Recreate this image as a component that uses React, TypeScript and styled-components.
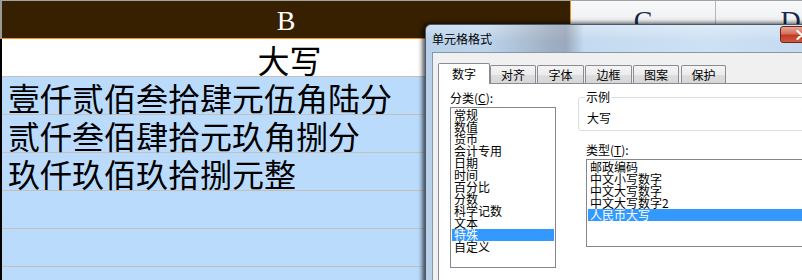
import React from 'react';
import styled, { createGlobalStyle } from 'styled-components';

const UI_FONT = `"Noto Sans CJK SC", "Noto Sans", sans-serif`;

const GlobalStyle = createGlobalStyle`
  html, body { margin: 0; padding: 0; background: #fff; overflow: hidden; }
  #root { width: 802px; height: 280px; }
`;

const Screen = styled.div`
  position: relative;
  width: 802px;
  height: 280px;
  overflow: hidden;
  background: #fff;
`;

const Sheet = styled.div`
  display: flex;
  flex-direction: column;
`;

const HeaderRow = styled.div`
  display: flex;
  border-top: 1px solid #a3a3a3;
  border-left: 2px solid #9a9a9a;
`;

const HeaderCell = styled.div<{ $w: number; $active?: boolean }>`
  box-sizing: border-box;
  width: ${(p) => p.$w}px;
  flex: none;
  height: 38px;
  padding-top: 2px;
  display: flex;
  align-items: center;
  justify-content: center;
  font-family: "Liberation Serif", "DejaVu Serif", serif;
  font-size: 28px;
  line-height: 30px;
  color: ${(p) => (p.$active ? '#ffffff' : '#16284a')};
  background: ${(p) => (p.$active ? '#372000' : 'linear-gradient(#f7f8f9, #e9ebee)')};
  border-right: 1px solid ${(p) => (p.$active ? '#f0902a' : '#b4b8be')};
  border-bottom: 1px solid ${(p) => (p.$active ? '#f0902a' : '#b4b8be')};
`;

const Body = styled.div`
  display: flex;
  flex-direction: column;
  border-left: 2px solid #000;
`;

const Row = styled.div<{ $selected?: boolean; $center?: boolean }>`
  box-sizing: border-box;
  width: 569px;
  height: 38px;
  padding: 2px 0 0 6px;
  display: flex;
  align-items: center;
  justify-content: ${(p) => (p.$center ? 'center' : 'flex-start')};
  background: ${(p) => (p.$selected ? '#bbdbfc' : '#ffffff')};
  border-bottom: 1px solid #c6c0bb;
  font-family: ${UI_FONT};
  font-size: 32px;
  line-height: 34px;
  color: #000;
  white-space: nowrap;
`;

const Dialog = styled.div`
  position: absolute;
  left: 425px;
  top: 24px;
  width: 404px;
  height: 290px;
  box-sizing: border-box;
  border: 1px solid #4b596c;
  border-radius: 6px 6px 0 0;
  background: linear-gradient(90deg, #b8d0e9 0%, #c4daf0 40%, #cde1f4 70%, #c3d9ef 100%);
  box-shadow: -3px 0 4px rgba(0, 0, 0, 0.55), 0 -2px 4px rgba(0, 0, 0, 0.3);
  display: flex;
  flex-direction: column;
  font-family: ${UI_FONT};
  font-size: 12px;
  color: #000;
`;

const TitleBar = styled.div`
  height: 27px;
  flex: none;
  display: flex;
  align-items: flex-start;
  padding: 0 5px 0 6px;
  border-radius: 5px 5px 0 0;
  background:
    linear-gradient(90deg, transparent 60px, rgba(70, 70, 80, 0.28) 125px, rgba(70, 70, 80, 0.32) 140px, transparent 158px),
    linear-gradient(180deg, rgba(255, 255, 255, 0.35), rgba(255, 255, 255, 0) 60%);
`;

const Title = styled.div`
  flex: 1;
  margin-top: 8px;
  line-height: 12px;
  white-space: nowrap;
`;

const CloseButton = styled.div`
  flex: none;
  box-sizing: border-box;
  width: 43px;
  height: 17px;
  margin-top: 1px;
  border: 1px solid #6e2418;
  border-radius: 3px;
  background: linear-gradient(180deg, #e8a89a 0%, #d66f5b 45%, #c23a23 55%, #cf5a40 100%);
  display: flex;
  align-items: center;
  justify-content: center;
`;

const Client = styled.div`
  flex: 1;
  margin: 0 6px;
  box-sizing: border-box;
  border: 1px solid #8597ad;
  border-bottom: none;
  background: #f0f0f0;
  padding: 10px 0 0 5px;
  display: flex;
  flex-direction: column;
`;

const TabStrip = styled.div`
  display: flex;
  align-items: flex-end;
  height: 20px;
  flex: none;
`;

const Tab = styled.div<{ $w: number; $ml: number; $active?: boolean }>`
  box-sizing: border-box;
  width: ${(p) => p.$w}px;
  margin-left: ${(p) => p.$ml}px;
  height: ${(p) => (p.$active ? 21 : 18)}px;
  margin-bottom: ${(p) => (p.$active ? -1 : 0)}px;
  padding-top: ${(p) => (p.$active ? 0 : 1)}px;
  position: relative;
  z-index: ${(p) => (p.$active ? 1 : 0)};
  border: 1px solid #898c95;
  border-bottom: none;
  border-radius: 2px 2px 0 0;
  background: ${(p) =>
    p.$active ? '#ffffff' : 'linear-gradient(180deg, #f4f4f4 0%, #ececec 50%, #dedede 51%, #d6d6d6 100%)'};
  display: flex;
  align-items: center;
  justify-content: center;
  line-height: 12px;
  white-space: nowrap;
`;

const TabPanel = styled.div`
  flex: 1;
  box-sizing: border-box;
  background: #ffffff;
  border: 1px solid #898c95;
  border-right: none;
  border-bottom: none;
  padding: 8px 0 0 11px;
  display: flex;
  gap: 22px;
`;

const Column = styled.div<{ $w: number }>`
  width: ${(p) => p.$w}px;
  flex: none;
  display: flex;
  flex-direction: column;
`;

const FieldLabel = styled.div<{ $indent?: number; $mt?: number }>`
  height: 12px;
  line-height: 12px;
  margin-left: ${(p) => p.$indent ?? 0}px;
  margin-top: ${(p) => p.$mt ?? 0}px;
  white-space: nowrap;
`;

const Key = styled.span`
  text-decoration: underline;
`;

const ListBox = styled.div<{ $w: number; $h: number; $indent?: number }>`
  box-sizing: border-box;
  width: ${(p) => p.$w}px;
  height: ${(p) => p.$h}px;
  margin-top: 3px;
  margin-left: ${(p) => p.$indent ?? 0}px;
  padding: 1px;
  border: 1px solid #828790;
  background: #fff;
  display: flex;
  flex-direction: column;
  overflow: hidden;
`;

const ListItem = styled.div<{ $selected?: boolean }>`
  height: 12px;
  flex: none;
  line-height: 12px;
  padding-left: 2px;
  white-space: nowrap;
  background: ${(p) => (p.$selected ? '#3399ff' : 'transparent')};
  color: ${(p) => (p.$selected ? '#ffffff' : '#000000')};
`;

const GroupBox = styled.div`
  box-sizing: border-box;
  width: 260px;
  height: 34px;
  margin-top: 5px;
  padding-left: 6px;
  border: 1px solid #d5dfe5;
  border-radius: 3px;
  display: flex;
  flex-direction: column;
`;

const Legend = styled.div`
  align-self: flex-start;
  margin-top: -7px;
  padding: 0 1px;
  height: 12px;
  line-height: 12px;
  background: #fff;
`;

const Sample = styled.div`
  margin-top: 9px;
  padding-left: 2px;
  height: 12px;
  line-height: 12px;
`;

const rows = [
  { text: '大写', selected: false, center: true },
  { text: '壹仟贰佰叁拾肆元伍角陆分', selected: true },
  { text: '贰仟叁佰肆拾元玖角捌分', selected: true },
  { text: '玖仟玖佰玖拾捌元整', selected: true },
  { text: '', selected: true },
  { text: '', selected: true },
  { text: '', selected: true },
];

const tabs = [
  { label: '数字', w: 52, ml: 0, active: true },
  { label: '对齐', w: 46, ml: 0 },
  { label: '字体', w: 47, ml: 1 },
  { label: '边框', w: 47, ml: 1 },
  { label: '图案', w: 46, ml: 1 },
  { label: '保护', w: 45, ml: 2 },
];

const categories = ['常规', '数值', '货币', '会计专用', '日期', '时间', '百分比', '分数', '科学记数', '文本', '特殊', '自定义'];
const types = ['邮政编码', '中文小写数字', '中文大写数字', '中文大写数字2', '人民币大写'];

export default function App() {
  return (
    <>
      <GlobalStyle />
      <Screen>
        <Sheet>
          <HeaderRow>
            <HeaderCell $w={569} $active>B</HeaderCell>
            <HeaderCell $w={145}>C</HeaderCell>
            <HeaderCell $w={150}>D</HeaderCell>
          </HeaderRow>
          <Body>
            {rows.map((r, i) => (
              <Row key={i} $selected={r.selected} $center={r.center}>
                {r.text}
              </Row>
            ))}
          </Body>
        </Sheet>

        <Dialog>
          <TitleBar>
            <Title>单元格格式</Title>
            <CloseButton>
              <svg width="11" height="10" viewBox="0 0 11 10">
                <path d="M1.5 1 L9.5 9 M9.5 1 L1.5 9" stroke="#ffffff" strokeWidth="2.2" strokeLinecap="round" />
              </svg>
            </CloseButton>
          </TitleBar>
          <Client>
            <TabStrip>
              {tabs.map((t) => (
                <Tab key={t.label} $w={t.w} $ml={t.ml} $active={t.active}>
                  {t.label}
                </Tab>
              ))}
            </TabStrip>
            <TabPanel>
              <Column $w={106}>
                <FieldLabel>
                  分类(<Key>C</Key>):
                </FieldLabel>
                <ListBox $w={106} $h={161}>
                  {categories.map((c) => (
                    <ListItem key={c} $selected={c === '特殊'}>
                      {c}
                    </ListItem>
                  ))}
                </ListBox>
              </Column>
              <Column $w={300}>
                <GroupBox>
                  <Legend>示例</Legend>
                  <Sample>大写</Sample>
                </GroupBox>
                <FieldLabel $indent={8} $mt={13}>
                  类型(<Key>T</Key>):
                </FieldLabel>
                <ListBox $w={300} $h={88} $indent={8}>
                  {types.map((t) => (
                    <ListItem key={t} $selected={t === '人民币大写'}>
                      {t}
                    </ListItem>
                  ))}
                </ListBox>
              </Column>
            </TabPanel>
          </Client>
        </Dialog>
      </Screen>
    </>
  );
}
